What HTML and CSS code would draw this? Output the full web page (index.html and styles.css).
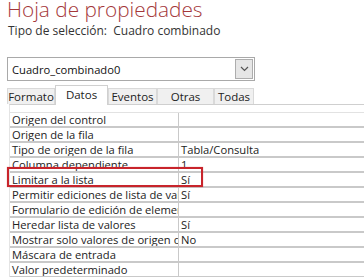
FILE: index.html
```html
<!DOCTYPE html>
<html lang="es">
<head>
    <meta charset="UTF-8">
    <title>Hoja de propiedades</title>
    <link rel="stylesheet" href="styles.css">
</head>
<body>
    <div class="sheet">
        <h1 class="title">Hoja de propiedades</h1>
        <div class="sel">Tipo de selección:&nbsp; Cuadro combinado</div>

        <div class="combo">
            <span class="combo-text">Cuadro_combinado0</span>
            <span class="combo-btn">
                <svg width="9" height="6" viewBox="0 0 9 6"><path d="M1 1 L4.5 4.5 L8 1" fill="none" stroke="#555" stroke-width="1.2"/></svg>
            </span>
        </div>

        <div class="tabs">
            <div class="tab t-formato">Formato</div>
            <div class="tab active t-datos">Datos</div>
            <div class="tab t-eventos">Eventos</div>
            <div class="tab t-otras">Otras</div>
            <div class="tab t-todas">Todas</div>
        </div>

        <div class="props">
            <div class="spacer"></div>
            <div class="row"><div class="lbl">Origen del control</div><div class="val"></div></div>
            <div class="row"><div class="lbl">Origen de la fila</div><div class="val"></div></div>
            <div class="row"><div class="lbl">Tipo de origen de la fila</div><div class="val">Tabla/Consulta</div></div>
            <div class="row"><div class="lbl">Columna dependiente</div><div class="val">1</div></div>
            <div class="row"><div class="lbl">Limitar a la lista</div><div class="val">Sí</div></div>
            <div class="row"><div class="lbl">Permitir ediciones de lista de valores</div><div class="val">Sí</div></div>
            <div class="row"><div class="lbl">Formulario de edición de elementos de lista</div><div class="val"></div></div>
            <div class="row"><div class="lbl">Heredar lista de valores</div><div class="val">Sí</div></div>
            <div class="row"><div class="lbl">Mostrar solo valores de origen de la fila</div><div class="val">No</div></div>
            <div class="row"><div class="lbl">Máscara de entrada</div><div class="val"></div></div>
            <div class="row"><div class="lbl">Valor predeterminado</div><div class="val"></div></div>
            <div class="row"><div class="lbl">Regla de validación</div><div class="val"></div></div>
        </div>

        <div class="highlight"></div>
    </div>
</body>
</html>
```

FILE: styles.css
```css
* {
    margin: 0;
    padding: 0;
    box-sizing: border-box;
}
body {
    background: #fff;
    font-family: "Open Sans", "Noto Sans", sans-serif;
    color: #222;
    overflow: hidden;
}
.sheet {
    position: relative;
    width: 364px;
    height: 277px;
    overflow: hidden;
    background: #fff;
}
.title {
    font-weight: 300;
    font-size: 20.8px;
    line-height: 22px;
    color: #a4373a;
    padding-left: 7px;
    margin-top: -2px;
}
.sel {
    font-size: 12px;
    line-height: 14px;
    padding: 4px 0 0 8px;
    color: #333;
}

/* combo box */
.combo {
    display: flex;
    align-items: center;
    margin: 19px 0 0 7px;
    width: 248px;
    height: 24px;
    border: 1px solid #a9a9a9;
    background: #fff;
}
.combo-text {
    flex: 1;
    font-size: 11.2px;
    padding-left: 4px;
    color: #111;
}
.combo-btn {
    display: flex;
    align-items: center;
    justify-content: center;
    width: 18px;
    height: 20px;
    margin-right: 1px;
    background: #e6e6e6;
    border: 1px solid #adadad;
}

/* tabs */
.tabs {
    display: flex;
    align-items: flex-end;
    height: 20px;
    margin: 3px 0 0 7px;
}
.tab {
    height: 16px;
    font-size: 11.5px;
    line-height: 15px;
    text-align: center;
    background: #f0f0f0;
    border: 1px solid #d9d9d9;
    border-bottom: none;
    color: #222;
}
.tab.active {
    height: 20px;
    line-height: 17px;
    background: #fff;
    border-color: #d0d0d0;
    margin-bottom: -1px;
    position: relative;
}
.t-formato { width: 48px; }
.t-datos { width: 53px; }
.t-eventos { width: 49px; }
.t-otras { width: 57px; }
.t-todas { width: 40px; }

/* property grid */
.props {
    margin-left: 9px;
    background: #fff;
    border-top: 1px solid #cfcfcf;
    border-left: 1px solid #e4e4e4;
}
.spacer {
    height: 8px;
    border-bottom: 1px solid #e2e2e2;
}
.row {
    display: flex;
    height: 15px;
    border-bottom: 2px solid #c9c9c9;
    font-size: 11.2px;
    line-height: 13px;
}
.lbl {
    width: 169px;
    padding-left: 2px;
    white-space: nowrap;
    overflow: hidden;
    border-right: 1px solid #c9c9c9;
}
.val {
    flex: 1;
    padding-left: 2px;
    white-space: nowrap;
}

.highlight {
    position: absolute;
    left: 7px;
    top: 167px;
    width: 196px;
    height: 20px;
    border: 2px solid #c8242b;
    box-shadow: 0 0 1px rgba(200, 36, 43, 0.5);
}
```
